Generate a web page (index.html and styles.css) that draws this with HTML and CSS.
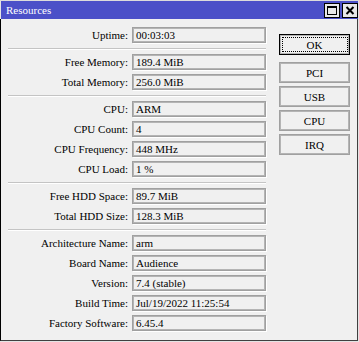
FILE: index.html
```html
<!DOCTYPE html>
<html lang="en">

<head>
    <meta charset="UTF-8">
    <meta name="viewport" content="width=device-width, initial-scale=1.0">
    <title>Resources</title>
    <link rel="stylesheet" href="styles.css">
</head>

<body>
    <div class="window">
        <div class="titlebar">
            <span class="title">Resources</span>
            <div class="title-btns">
                <span class="tbtn">
                    <svg width="14" height="13" viewBox="0 0 14 13">
                        <rect x="2.5" y="2.5" width="9" height="8" fill="none" stroke="#000" />
                        <rect x="2" y="2" width="10" height="2" fill="#000" />
                    </svg>
                </span>
                <span class="tbtn">
                    <svg width="14" height="13" viewBox="0 0 14 13">
                        <path d="M3.5 3 L10.5 10 M10.5 3 L3.5 10" stroke="#000" stroke-width="2" />
                    </svg>
                </span>
            </div>
        </div>
        <div class="client">
            <div class="form">
                <div class="row"><span class="label">Uptime:</span><div class="field">00:03:03</div></div>
                <div class="sep"></div>
                <div class="row"><span class="label">Free Memory:</span><div class="field">189.4 MiB</div></div>
                <div class="row"><span class="label">Total Memory:</span><div class="field">256.0 MiB</div></div>
                <div class="sep"></div>
                <div class="row"><span class="label">CPU:</span><div class="field">ARM</div></div>
                <div class="row"><span class="label">CPU Count:</span><div class="field">4</div></div>
                <div class="row"><span class="label">CPU Frequency:</span><div class="field">448 MHz</div></div>
                <div class="row"><span class="label">CPU Load:</span><div class="field">1 %</div></div>
                <div class="sep"></div>
                <div class="row"><span class="label">Free HDD Space:</span><div class="field">89.7 MiB</div></div>
                <div class="row"><span class="label">Total HDD Size:</span><div class="field">128.3 MiB</div></div>
                <div class="sep"></div>
                <div class="row"><span class="label">Architecture Name:</span><div class="field">arm</div></div>
                <div class="row"><span class="label">Board Name:</span><div class="field">Audience</div></div>
                <div class="row"><span class="label">Version:</span><div class="field">7.4 (stable)</div></div>
                <div class="row"><span class="label">Build Time:</span><div class="field">Jul/19/2022 11:25:54</div></div>
                <div class="row"><span class="label">Factory Software:</span><div class="field">6.45.4</div></div>
            </div>
            <div class="actions">
                <button class="btn default">OK</button>
                <button class="btn">PCI</button>
                <button class="btn">USB</button>
                <button class="btn">CPU</button>
                <button class="btn">IRQ</button>
            </div>
        </div>
    </div>
</body>

</html>
```

FILE: styles.css
```css
body {
    margin: 0;
    font-family: "Liberation Serif", "Times New Roman", serif;
    font-size: 11px;
    color: #000;
}

.window {
    width: 359px;
    height: 342px;
    box-sizing: border-box;
    border-top: 1px solid #dcdcdc;
    background-color: #e4e4e4;
    display: flex;
    flex-direction: column;
}

.titlebar {
    height: 18px;
    margin: 0 1px;
    background-color: #4b50c8;
    color: #fff;
    display: flex;
    align-items: center;
    padding-left: 5px;
}

.title {
    line-height: 18px;
}

.title-btns {
    margin-left: auto;
    display: flex;
    gap: 2px;
    padding-right: 0;
}

.tbtn {
    width: 16px;
    height: 15px;
    box-sizing: border-box;
    border: 1px solid #000;
    background-color: #e8e8e8;
    display: flex;
    align-items: center;
    justify-content: center;
}

.tbtn svg {
    display: block;
}

.client {
    flex: 1;
    margin: 0 1px 1px 0;
    background-color: #f0f0f0;
    border-left: 1px solid #000;
    border-right: 1px solid #404040;
    border-bottom: 1px solid #404040;
    padding: 8px 6px 0 7px;
    display: flex;
    gap: 13px;
}

.form {
    width: 258px;
    display: flex;
    flex-direction: column;
    gap: 4px;
}

.row {
    display: grid;
    grid-template-columns: 120px 134px;
    gap: 4px;
    height: 16px;
    align-items: center;
}

.label {
    text-align: right;
    white-space: nowrap;
}

.field {
    height: 16px;
    box-sizing: border-box;
    border: 1px solid #a0a0a0;
    box-shadow: inset 0 0 0 1px #b4b4b4, 1px 1px 0 #fff;
    padding: 0 3px;
    line-height: 14px;
    white-space: nowrap;
    overflow: hidden;
}

.sep {
    height: 1px;
    margin-top: 1px;
    background-color: #c4c4c4;
    border-bottom: 1px solid #fff;
}

.actions {
    width: 71px;
    padding-top: 7px;
    display: flex;
    flex-direction: column;
    gap: 3px;
}

.btn {
    height: 21px;
    margin: 0;
    padding: 0;
    box-sizing: border-box;
    border: 1px solid #a0a0a0;
    box-shadow: inset 0 0 0 1px #b4b4b4;
    background-color: #f0f0f0;
    font-family: "Liberation Serif", "Times New Roman", serif;
    font-size: 11px;
    color: #000;
    position: relative;
}

.btn.default {
    border-color: #000;
    margin-bottom: 4px;
}

.btn.default::after {
    content: "";
    position: absolute;
    top: 2px;
    left: 2px;
    right: 1px;
    bottom: 2px;
    border: 1px dotted #000;
}
```
